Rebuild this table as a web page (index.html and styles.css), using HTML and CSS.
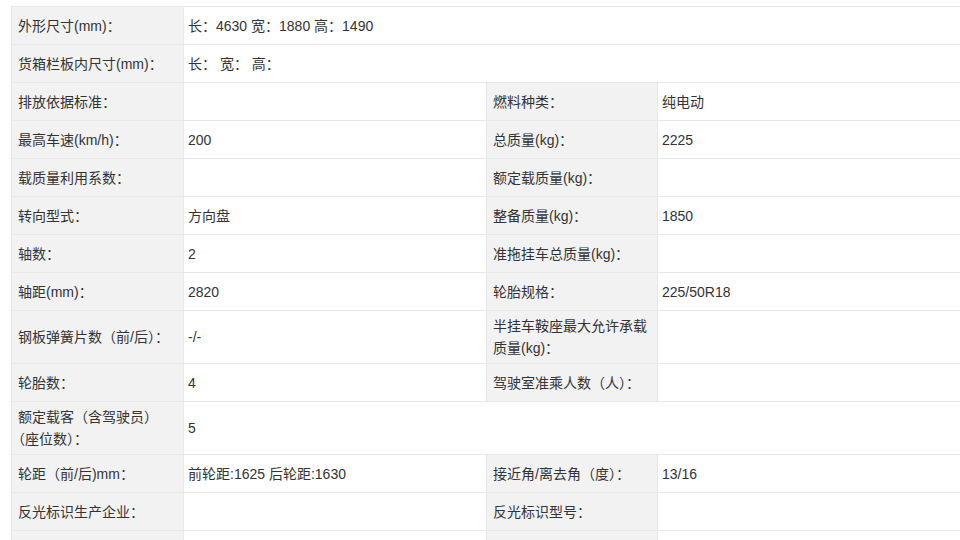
FILE: index.html
```html
<!DOCTYPE html>
<html lang="zh-CN">
<head>
<meta charset="utf-8">
<title>参数</title>
<link rel="stylesheet" href="styles.css">
</head>
<body>
<div class="wrap">
<table class="spec">
  <colgroup>
    <col class="c1"><col class="c2"><col class="c3"><col class="c4">
  </colgroup>
  <tbody>
    <tr><td class="lb">外形尺寸(mm)：</td><td class="val" colspan="3">长：4630 宽：1880 高：1490</td></tr>
    <tr><td class="lb">货箱栏板内尺寸(mm)：</td><td class="val" colspan="3">长： 宽： 高：</td></tr>
    <tr><td class="lb">排放依据标准：</td><td class="val"></td><td class="lb">燃料种类：</td><td class="val">纯电动</td></tr>
    <tr><td class="lb">最高车速(km/h)：</td><td class="val">200</td><td class="lb">总质量(kg)：</td><td class="val">2225</td></tr>
    <tr><td class="lb">载质量利用系数：</td><td class="val"></td><td class="lb">额定载质量(kg)：</td><td class="val"></td></tr>
    <tr><td class="lb">转向型式：</td><td class="val">方向盘</td><td class="lb">整备质量(kg)：</td><td class="val">1850</td></tr>
    <tr><td class="lb">轴数：</td><td class="val">2</td><td class="lb">准拖挂车总质量(kg)：</td><td class="val"></td></tr>
    <tr><td class="lb">轴距(mm)：</td><td class="val">2820</td><td class="lb">轮胎规格：</td><td class="val">225/50R18</td></tr>
    <tr><td class="lb">钢板弹簧片数（前/后）：</td><td class="val">-/-</td><td class="lb">半挂车鞍座最大允许承载质量(kg)：</td><td class="val"></td></tr>
    <tr><td class="lb">轮胎数：</td><td class="val">4</td><td class="lb">驾驶室准乘人数（人）：</td><td class="val"></td></tr>
    <tr><td class="lb">额定载客（含驾驶员）<span class="nw">（座位数）：</span></td><td class="val" colspan="3">5</td></tr>
    <tr><td class="lb">轮距（前/后)mm：</td><td class="val">前轮距:1625 后轮距:1630</td><td class="lb">接近角/离去角（度）：</td><td class="val">13/16</td></tr>
    <tr><td class="lb">反光标识生产企业：</td><td class="val"></td><td class="lb">反光标识型号：</td><td class="val"></td></tr>
    <tr><td class="lb"></td><td class="val"></td><td class="lb"></td><td class="val"></td></tr>
  </tbody>
</table>
</div>
</body>
</html>
```

FILE: styles.css
```css
html, body {
  margin: 0;
  padding: 0;
  background: #ffffff;
  overflow: hidden;
}

.wrap {
  padding: 6px 0 0 11px;
  width: 1100px;
}

.spec {
  border-collapse: collapse;
  table-layout: fixed;
  width: 1046px;
  font-family: "Liberation Sans", "Noto Sans CJK SC", sans-serif;
  font-size: 14px;
  line-height: 22px;
  color: #333333;
}

.c1 { width: 172px; }
.c2 { width: 303px; }
.c3 { width: 171px; }
.c4 { width: 400px; }

.spec tr {
  height: 38px;
}

.spec td {
  border: 1px solid #e8e8e8;
  padding: 4px 4px 4px 6px;
  vertical-align: middle;
  word-break: normal;
}

.spec td.lb {
  background: #f2f2f2;
}

.spec td.val {
  background: #ffffff;
  padding-left: 4px;
}

.nw {
  white-space: nowrap;
}
```
